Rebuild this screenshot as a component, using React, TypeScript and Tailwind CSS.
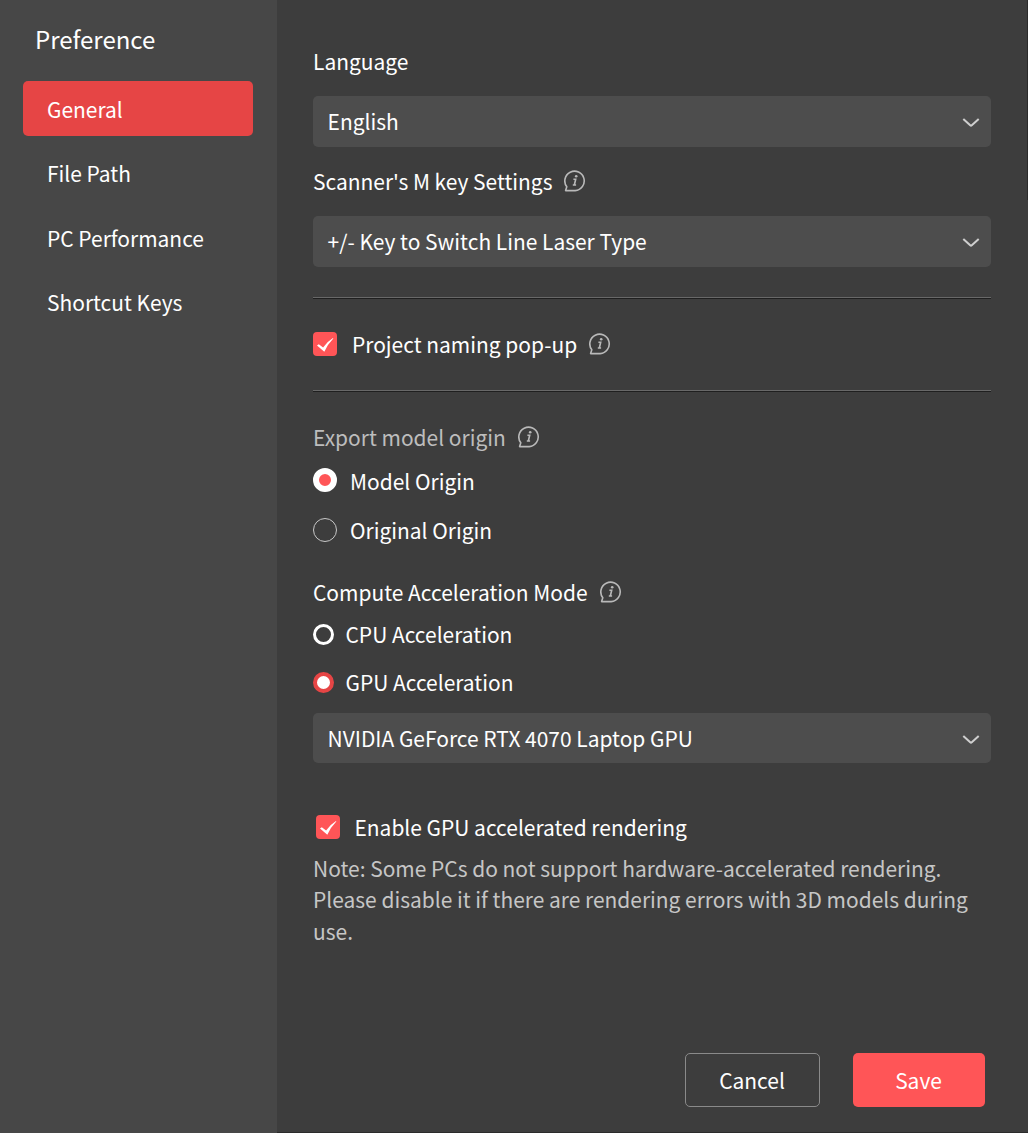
import { ReactNode, useState } from 'react';
import clsx from 'clsx';

const MENU = ['General', 'File Path', 'PC Performance', 'Shortcut Keys'];

function InfoIcon() {
  return (
    <svg width="22" height="22" viewBox="0 0 22 22" fill="none" className="mt-px shrink-0 text-[#b9b9b9]">
      <path
        d="M1.6 20.6 L2.8 16.8 A9.7 9.7 0 1 1 11.2 20.6 Z"
        stroke="currentColor"
        strokeWidth="1.6"
        strokeLinejoin="round"
      />
      <circle cx="12.2" cy="6.2" r="1.3" fill="currentColor" />
      <path d="M9.4 9.3 H11.7 L10.4 14.7 M8.8 15 H12.1" stroke="currentColor" strokeWidth="1.6" />
    </svg>
  );
}

function CheckBox({ checked, onChange }: { checked: boolean; onChange: (value: boolean) => void }) {
  return (
    <button
      role="checkbox"
      aria-checked={checked}
      onClick={() => onChange(!checked)}
      className={clsx('mt-0.5 h-6 w-6 shrink-0 rounded', checked ? 'bg-[#ff5557]' : 'border border-[#b9b9b9]')}
    >
      {checked && (
        <svg width="24" height="24" viewBox="0 0 24 24">
          <path d="M4 13.4 L5.8 12.2 L10.1 15.4 Q14 9.6 20 5.9 L20.3 6.5 Q14.8 12 11.3 19.8 Z" fill="#fff" />
        </svg>
      )}
    </button>
  );
}

function Select({ value, className }: { value: string; className?: string }) {
  return (
    <button
      className={clsx(
        'flex w-[678px] items-center justify-between rounded-[5px] bg-[#4d4d4d] pr-[11px] pb-px pl-[14.6px] text-left',
        className
      )}
    >
      <span>{value}</span>
      <svg width="18" height="12" viewBox="0 0 18 12" fill="none" className="mt-1">
        <path d="M1.3 2 L8.2 8.3 Q9 9 9.8 8.3 L16.7 2" stroke="#cfcfcf" strokeWidth="2" />
      </svg>
    </button>
  );
}

function Label({ children, info, className }: { children: ReactNode; info?: boolean; className?: string }) {
  return (
    <div className={clsx('flex h-8 items-center gap-3', className)}>
      <span className="pt-0.5">{children}</span>
      {info && <InfoIcon />}
    </div>
  );
}

function Divider() {
  return <div className="h-0.5 w-[678px] border-t border-b border-t-[#686868] border-b-[#1f1f1f]" />;
}

export default function App() {
  const [active, setActive] = useState('General');
  const [naming, setNaming] = useState(true);
  const [rendering, setRendering] = useState(true);
  const [origin, setOrigin] = useState('Model Origin');
  const [mode, setMode] = useState('GPU Acceleration');

  return (
    <div className="flex h-[1133px] w-[1028px] overflow-hidden bg-[#3d3d3d] font-['Noto_Sans_CJK_SC',sans-serif] text-[20.96px] leading-8 text-white">
      <aside className="w-[277px] shrink-0 bg-[#474747] pt-[21px] pl-[23px]">
        <h1 className="mb-[25px] pl-3 text-2xl leading-[35px]">Preference</h1>
        <nav className="flex flex-col gap-[9.5px]">
          {MENU.map((item) => (
            <button
              key={item}
              onClick={() => setActive(item)}
              className={clsx('h-[55px] w-[230px] rounded-[5px] pl-6 text-left', active === item && 'bg-[#e64545]')}
            >
              {item}
            </button>
          ))}
        </nav>
      </aside>

      <main className="flex flex-1 flex-col border-b border-[#2b2b2b] pt-11 pl-9">
        <Label>Language</Label>
        <Select value="English" className="mt-5 h-[51px]" />
        <Label info className="mt-[17px]">Scanner's M key Settings</Label>
        <Select value="+/- Key to Switch Line Laser Type" className="mt-5 h-[51px]" />

        <div className="mt-[30px]">
          <Divider />
        </div>
        <div className="mt-7 mb-[31px] flex h-8 items-center gap-[15px]">
          <CheckBox checked={naming} onChange={setNaming} />
          <Label info>Project naming pop-up</Label>
        </div>
        <Divider />

        <Label info className="mt-7 text-[#bdbdbd]">Export model origin</Label>
        <div className="mt-3 flex flex-col gap-[17px]">
          {['Model Origin', 'Original Origin'].map((item) => (
            <button key={item} onClick={() => setOrigin(item)} className="flex h-8 items-center gap-[13px]">
              <span
                className={clsx(
                  'h-6 w-6 rounded-full',
                  origin === item ? 'border-[6px] border-white bg-[#ff5557]' : 'mt-0.5 border-[1.5px] border-[#c8c8c8]'
                )}
              />
              <span className="pt-0.5">{item}</span>
            </button>
          ))}
        </div>

        <Label info className="mt-[30px]">Compute Acceleration Mode</Label>
        <div className="mt-[10px] flex flex-col gap-4">
          {['CPU Acceleration', 'GPU Acceleration'].map((item) => (
            <button key={item} onClick={() => setMode(item)} className="flex h-8 items-center gap-[11.5px]">
              <span
                className={clsx(
                  'mt-[3px] h-[21px] w-[21px] rounded-full',
                  mode === item ? 'border-[4.5px] border-[#e64545] bg-white' : 'border-[3px] border-white'
                )}
              />
              <span className="pt-0.5">{item}</span>
            </button>
          ))}
        </div>
        <Select value="NVIDIA GeForce RTX 4070 Laptop GPU" className="mt-4 h-[50px]" />

        <div className="mt-[47px] flex h-8 items-center gap-[14.5px] pl-[3px]">
          <CheckBox checked={rendering} onChange={setRendering} />
          <span className="pt-0.5">Enable GPU accelerated rendering</span>
        </div>
        <p className="mt-[10.8px] w-[678px] leading-[31.5px] text-[#c6c6c6]">
          Note: Some PCs do not support hardware-accelerated rendering. Please disable it if there are rendering errors
          with 3D models during use.
        </p>

        <div className="mt-auto mr-[43px] mb-[25px] flex justify-end gap-[33px]">
          <button className="h-[54px] w-[135px] rounded-[5px] border border-[#8a8a8a] pr-px">Cancel</button>
          <button className="h-[54px] w-[132px] rounded-[5px] bg-[#ff5557] pr-px">Save</button>
        </div>
      </main>
      <div className="-ml-px h-[200px] w-px bg-[#2b2b2b]" />
    </div>
  );
}
